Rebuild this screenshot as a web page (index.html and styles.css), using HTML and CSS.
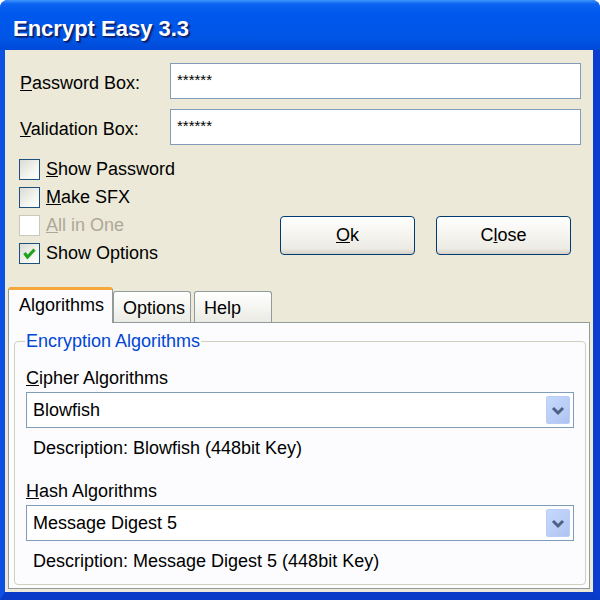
FILE: index.html
```html
<!DOCTYPE html>
<html>
<head>
<meta charset="utf-8">
<link rel="stylesheet" href="styles.css">
</head>
<body>
<div class="window">
  <div class="titlebar"><span class="title">Encrypt Easy 3.3</span></div>
  <div class="body">
    <div class="field-row">
      <span class="label"><u>P</u>assword Box:</span>
      <div class="input">******</div>
    </div>
    <div class="field-row">
      <span class="label"><u>V</u>alidation Box:</span>
      <div class="input">******</div>
    </div>
    <div class="mid">
      <div class="checks">
        <div class="check"><span class="box"></span><span><u>S</u>how Password</span></div>
        <div class="check"><span class="box"></span><span><u>M</u>ake SFX</span></div>
        <div class="check disabled"><span class="box"></span><span><u>A</u>ll in One</span></div>
        <div class="check"><span class="box"><svg width="21" height="21" viewBox="0 0 21 21"><path d="M5.5 10 L8.5 14 L15.5 6.5" fill="none" stroke="#21A121" stroke-width="3.2"/></svg></span><span>Show Options</span></div>
      </div>
      <div class="buttons">
        <div class="btn"><u>O</u>k</div>
        <div class="btn">C<u>l</u>ose</div>
      </div>
    </div>
    <div class="tabs">
      <div class="tabstrip">
        <div class="tab active">Algorithms</div>
        <div class="tab">Options</div>
        <div class="tab">Help</div>
      </div>
      <div class="panel">
        <fieldset class="group">
          <legend>Encryption Algorithms</legend>
          <div class="sublabel first"><u>C</u>ipher Algorithms</div>
          <div class="combo"><span>Blowfish</span><span class="drop"><svg width="24" height="28" viewBox="0 0 24 28"><path d="M7 12 L12 17 L17 12" fill="none" stroke="#4D6185" stroke-width="3"/></svg></span></div>
          <div class="desc">Description: Blowfish (448bit Key)</div>
          <div class="sublabel"><u>H</u>ash Algorithms</div>
          <div class="combo"><span>Message Digest 5</span><span class="drop"><svg width="24" height="28" viewBox="0 0 24 28"><path d="M7 12 L12 17 L17 12" fill="none" stroke="#4D6185" stroke-width="3"/></svg></span></div>
          <div class="desc">Description: Message Digest 5 (448bit Key)</div>
        </fieldset>
      </div>
    </div>
  </div>
</div>
</body>
</html>
```

FILE: styles.css
```css
* { box-sizing: border-box; }
html, body { margin: 0; padding: 0; }
body {
  width: 600px;
  height: 600px;
  background: #ffffff;
  font-family: "Liberation Sans", Arial, sans-serif;
  font-size: 18px;
  color: #000;
}
.window {
  width: 600px;
  height: 600px;
  display: flex;
  flex-direction: column;
  background: #0a3fd0;
  border-radius: 8px 8px 0 0;
  overflow: hidden;
}
.titlebar {
  height: 50px;
  flex: none;
  background: linear-gradient(to bottom, #3f94ff 0px, #0a63f0 4px, #0058ee 14px, #0055e5 38px, #0049d8 50px);
  display: flex;
  align-items: center;
  padding-left: 13px;
  padding-top: 8px;
}
.title {
  color: #fff;
  font-weight: bold;
  font-size: 22px;
  text-shadow: 1px 1px 0 #0a2070, 2px 2px 1px #0a2a80;
}
.body {
  flex: 1;
  background: #ECE9D8;
  border-left: 5px solid #0b52e4;
  border-right: 7px solid #0a3dcf;
  border-bottom: 8px solid #0a3ac8;
  padding-top: 13px;
  display: flex;
  flex-direction: column;
}
.field-row {
  display: flex;
  align-items: center;
  height: 36px;
  padding: 0 12px 0 15px;
  margin-bottom: 10px;
}
.label {
  width: 150px;
  flex: none;
  padding-top: 4px;
}
.input {
  flex: 1;
  height: 36px;
  background: #fff;
  border: 1px solid #7F9DB9;
  font-size: 15px;
  line-height: 1;
  padding: 8px 0 0 6px;
}
.mid {
  display: flex;
  height: 112px;
  padding: 0 22px 0 14px;
}
.checks {
  display: flex;
  flex-direction: column;
}
.check {
  height: 28px;
  display: flex;
  align-items: center;
  gap: 6px;
}
.box {
  width: 21px;
  height: 21px;
  border: 1px solid #1C5180;
  background: linear-gradient(135deg, #dcdcd5 0%, #f4f4f0 60%, #ffffff 100%);
  display: block;
}
.box svg { display: block; margin: -1px; }
.check.disabled { color: #ACA899; }
.check.disabled .box { border-color: #CAC8BB; background: #fff; }
.buttons {
  margin-left: auto;
  align-self: flex-end;
  margin-bottom: 12px;
  display: flex;
  gap: 21px;
}
.btn {
  width: 135px;
  height: 39px;
  border: 1px solid #003C74;
  border-radius: 4px;
  background: linear-gradient(to bottom, #ffffff 0%, #f4f3ee 50%, #ecebe4 85%, #d6d0c5 100%);
  display: flex;
  align-items: center;
  justify-content: center;
}
.tabs {
  margin-top: 20px;
  padding: 0 3px 3px 3px;
  display: flex;
  flex-direction: column;
  flex: 1;
}
.tabstrip {
  display: flex;
  align-items: flex-end;
  height: 35px;
  position: relative;
  z-index: 1;
}
.tab {
  height: 31px;
  width: 78px;
  border: 1px solid #919B9C;
  border-bottom: none;
  border-radius: 3px 3px 0 0;
  background: linear-gradient(to bottom, #ffffff 0%, #f3f3ef 60%, #ebeae4 100%);
  display: flex;
  align-items: center;
  padding-left: 9px;
  padding-top: 2px;
  margin-right: 3px;
}
.tab.active {
  width: 105px;
  height: 36px;
  margin-bottom: -1px;
  margin-right: 0;
  background: #FCFCFE;
  border-top: 3px solid #F5A838;
  padding-left: 10px;
  padding-top: 0;
  padding-bottom: 3px;
}
.panel {
  flex: 1;
  background: #FCFCFE;
  border: 1px solid #919B9C;
  padding: 7px 3px 3px 5px;
  display: flex;
}
.group {
  flex: 1;
  margin: 0;
  border: 1px solid #D0D0BF;
  border-radius: 4px;
  padding: 0 11px 0 11px;
  min-width: 0;
}
.group legend {
  color: #0046D5;
  line-height: 22px;
  padding: 0 1px;
  margin-left: -1px;
}
.sublabel {
  line-height: 22px;
  margin-top: 21px;
}
.sublabel.first { margin-top: 15px; }
.combo {
  margin-top: 3px;
  height: 36px;
  border: 1px solid #7F9DB9;
  background: #fff;
  display: flex;
  align-items: center;
  padding-left: 6px;
}
.drop {
  margin-left: auto;
  margin-right: 3px;
  width: 24px;
  height: 28px;
  border-radius: 2px;
  background: linear-gradient(135deg, #c6d8fc 0%, #b9cdf6 60%, #aec3f0 100%);
  border: 1px solid #b9cdf7;
}
.drop svg { display: block; margin: -1px; }
.desc {
  line-height: 22px;
  margin-top: 9px;
  padding-left: 7px;
}
```
